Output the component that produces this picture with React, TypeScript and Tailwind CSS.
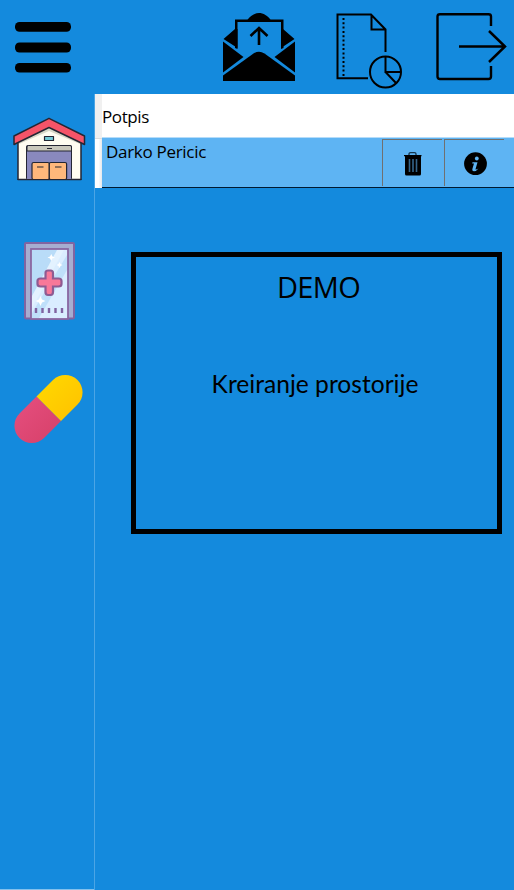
import React from 'react';

function MenuIcon() {
  return (
    <svg width="57" height="52" viewBox="0 0 57 52">
      <rect x="0" y="0" width="56" height="9.800" rx="4.500" />
      <rect x="0" y="20.500" width="56" height="10" rx="4.500" />
      <rect x="0" y="41" width="56" height="9.600" rx="4.500" />
    </svg>
  );
}

function MailIcon() {
  return (
    <svg width="73" height="69" viewBox="223 12 73 69">
      <path d="M247 20.500C250 15.500 255 13 259 13S268 15.500 271 20.500Z" />
      <path d="M235 48V19.500H283.500V48L281 49V22H237.500V49Z" />
      <path d="M235 29L223.500 39L237.500 48V29ZM283 29L294.500 39L281 48V29Z" />
      <path d="M223 41.500L243.500 57L223 72.500ZM295 41.500L274.500 57L295 72.500Z" />
      <path d="M223 81V75.500L253.500 53.500Q259 50 264.500 53.500L295 75.500V81Z" />
      <path d="M259 45V28M250.500 36L259 28L267.500 36" fill="none" stroke="#000" strokeWidth="2.600" />
    </svg>
  );
}

function ReportIcon() {
  return (
    <svg width="67" height="77" viewBox="336 13 67 77" fill="none" stroke="#000" strokeWidth="2">
      <path d="M368 78.300H337.500V14.500H371L385.500 29.500V52M371.500 15V29.500H385.500" />
      <path d="M343.500 18V76" strokeDasharray="2 2.300" />
      <circle cx="385.500" cy="72" r="15.500" />
      <path d="M385.500 56.500V72H401M385.500 72L396 83" />
    </svg>
  );
}

function ExitIcon() {
  return (
    <svg width="72" height="70" viewBox="436 12 72 70" fill="none" stroke="#000">
      <path d="M491 26V16.500Q491 14.300 488.500 14.300H440Q437.500 14.300 437.500 16.500V76.500Q437.500 79 440 79H488.500Q491 79 491 76.500V66" strokeWidth="2.400" />
      <path d="M459 46.500H505M489 31L505 46.500L489 62" strokeWidth="2.500" />
    </svg>
  );
}

function GarageIcon() {
  return (
    <svg width="74" height="65" viewBox="13 117 74 65" stroke="#242633" strokeWidth="1.500" strokeLinejoin="round">
      <path d="M18 139L49 122L81 139V179.500H18Z" fill="#fffdf1" />
      <path d="M19 140L49 125L80 140V144L49 131L19 144Z" fill="#d8d9c8" stroke="none" />
      <path d="M14 136L49 118.300L84.500 136V144.500L49 127.500L14 144.500Z" fill="#f55468" />
      <rect x="44.500" y="136.500" width="9" height="4" fill="#72cbd7" strokeWidth="1.200" />
      <rect x="26.500" y="145.500" width="45" height="34" rx="1" fill="#8989bd" strokeWidth="1" />
      <path d="M27 151V147Q27 145.500 28.500 145.500H70Q71.500 145.500 71.500 147V151Z" fill="#c9c8bc" strokeWidth="1" />
      <rect x="32" y="162.500" width="17.300" height="17" rx="1.500" fill="#ffb87b" strokeWidth="1.200" />
      <rect x="49.300" y="162.500" width="17.300" height="17" rx="1.500" fill="#ffb87b" strokeWidth="1.200" />
      <path d="M47 148.500H52M37 167H43.500M55 167H61.500M17.500 179.500H81.500" fill="none" strokeWidth="1.200" />
    </svg>
  );
}

function DoorIcon() {
  return (
    <svg width="51" height="78" viewBox="24 242 51 78">
      <rect x="25" y="243" width="49" height="75.500" rx="1" fill="#a6add0" stroke="#8064a1" strokeWidth="2" />
      <rect x="31" y="249" width="37" height="70" fill="#daedff" stroke="#8966a1" strokeWidth="1.800" />
      <path d="M32 250H58L32 299Z" fill="#b9dcf8" />
      <path d="M57 250H64L32 308V296Z" fill="#e3f2ff" />
      <path d="M67 255V270L39 318H32V313Z" fill="#bfe0fa" />
      <path d="M51.300 254L52.500 256.500L55 257.500L52.500 258.500L51.300 261L50 258.500L47.500 257.500L50 256.500ZM59.500 262L60.500 264L62.500 265L60.500 266L59.500 268L58.500 266L56.500 265L58.500 264ZM40.500 296L42 299.500L45.500 301L42 302.500L40.500 306L39 302.500L35.500 301L39 299.500Z" fill="#fff" />
      <path d="M45.500 273Q45.500 270.500 48 270.500H50.500Q53 270.500 53 273V278.500H58.500Q61.500 278.500 61.500 281V284Q61.500 286.500 58.500 286.500H53V292Q53 295 50.500 295H48Q45.500 295 45.500 292V286.500H40.500Q37.500 286.500 37.500 284V281Q37.500 278.500 40.500 278.500H45.500Z" fill="#f87899" stroke="#8e5b92" strokeWidth="2.200" />
      <path d="M36 308V313M42.500 308V313M49 308V313M55.500 308V313M62 308V313" stroke="#8064a1" strokeWidth="2.400" />
    </svg>
  );
}

function PillIcon() {
  return (
    <svg width="70" height="70" viewBox="14 374 70 70">
      <defs>
        <linearGradient id="pinkShell" x2="1" y2="1"><stop stopColor="#e64f80" /><stop offset="1" stopColor="#d64068" /></linearGradient>
        <linearGradient id="yellowShell" x2="1" y2="1"><stop stopColor="#ffda00" /><stop offset="1" stopColor="#ffc000" /></linearGradient>
      </defs>
      <path d="M37.500 396.500L20.500 413.500A17.300 17.300 0 0 0 45 438L62 421Z" fill="url(#pinkShell)" />
      <path d="M37.500 396.500L54 380A17.300 17.300 0 0 1 78.500 404.500L62 421Z" fill="url(#yellowShell)" />
    </svg>
  );
}

function TrashIcon() {
  return (
    <svg width="18" height="24" viewBox="0 0 18 24">
      <path d="M5 3V2Q5 0.700 6.500 0.700H10.500Q12 0.700 12 2V3" fill="none" stroke="#16354c" strokeWidth="1.300" />
      <path d="M0 3H17.500V4.300H17V22Q17 23.500 15.500 23.500H2.500Q1 23.500 1 22V4.300H0Z" />
      <path d="M5.500 7V20M9 7V20M12.500 7V20" stroke="#35658a" strokeWidth="1.600" />
    </svg>
  );
}

function InfoIcon() {
  return (
    <svg width="24" height="24" viewBox="0 0 24 24">
      <circle cx="11.500" cy="11.700" r="11.400" />
      <circle cx="12.800" cy="6.500" r="1.900" fill="#5eb4f3" />
      <path d="M8.500 10.300H13.500L11.500 17.200Q11.500 18.300 14.500 16.500Q12.500 19.200 10 19.200Q7.700 19.200 8.500 16.500L10 11.500H8.200Z" fill="#5eb4f3" />
    </svg>
  );
}

export default function App() {
  return (
    <div className="flex h-[890px] w-[514px] flex-col overflow-hidden bg-[#148add] text-black">
      <header className="flex h-[94px] shrink-0 items-start">
        <button aria-label="Menu" className="ml-[15px] mt-[22px]"><MenuIcon /></button>
        <button aria-label="Messages" className="ml-[151px] mt-3"><MailIcon /></button>
        <button aria-label="Report" className="ml-10 mt-[13px]"><ReportIcon /></button>
        <button aria-label="Exit" className="ml-[33px] mt-3 shrink-0"><ExitIcon /></button>
      </header>
      <div className="flex min-h-0 grow">
        <aside className="flex w-[95px] shrink-0 flex-col border-r border-r-[#4ba5e5]">
          <nav className="flex grow flex-col items-start border-b border-b-[#83c1ed]">
            <button aria-label="Garage" className="ml-[13px] mt-[23px]"><GarageIcon /></button>
            <button aria-label="Rooms" className="ml-6 mt-[60px]"><DoorIcon /></button>
            <button aria-label="Medicine" className="ml-[13px] mt-[54px]"><PillIcon /></button>
          </nav>
        </aside>
        <main className="min-w-0 grow">
          <section className="flex h-[94px] font-['Open_Sans',sans-serif] text-[17px]">
            <div className="flex w-[7px] shrink-0 flex-col">
              <div className="h-11 bg-[#f0f0f0]" />
              <div className="grow border-t border-[#ddd] bg-gradient-to-r from-white via-white to-[#e5e8ec]" />
            </div>
            <div className="grow">
              <div className="h-[43px] bg-white pt-[11px] leading-[24px] tracking-[-0.4px]">Potpis</div>
              <div className="flex h-[51px] border-b border-t border-b-[#001a30] border-t-[#b5dcf9] bg-[#5eb4f3]">
                <div className="w-[280px] shrink-0 pl-1 pt-[2px] leading-[24px] tracking-[-0.3px]">Darko Pericic</div>
                <button aria-label="Delete" className="mt-px mr-0.5 flex h-[47px] w-[60px] shrink-0 items-center justify-center border-l border-t border-[#707070] pt-[2px]"><TrashIcon /></button>
                <button aria-label="Details" className="mt-px flex h-[47px] w-[60px] shrink-0 items-center justify-center border-l border-t border-[#707070] pl-0.5 pt-[2px]"><InfoIcon /></button>
              </div>
            </div>
          </section>
          <section className="ml-9 mt-16 flex h-[282px] w-[371px] flex-col items-center border-[5px] border-black">
            <h1 className="ml-1 mt-[11px] font-['Open_Sans',sans-serif] text-[29px] leading-[38px] tracking-[-0.7px]">DEMO</h1>
            <p className="mt-[62px] mr-[3px] font-['Lato',sans-serif] text-[24.6px] leading-[32px]">Kreiranje prostorije</p>
          </section>
        </main>
      </div>
    </div>
  );
}
